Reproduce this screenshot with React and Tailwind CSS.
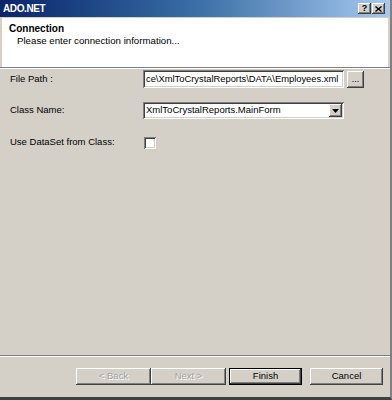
import React from "react";

const raised =
  "shadow-[inset_-1px_-1px_0_#404040,inset_1px_1px_0_#ffffff,inset_-2px_-2px_0_#808080,inset_2px_2px_0_#d4d0c8]";
const sunken =
  "shadow-[inset_1px_1px_0_#808080,inset_-1px_-1px_0_#ffffff,inset_2px_2px_0_#404040,inset_-2px_-2px_0_#d4d0c8]";

function Btn({ children, w, disabled, isDefault }) {
  return (
    <div
      className={`${w} h-[17px] bg-[#d4d0c8] flex items-center justify-center text-[9.5px] ${
        isDefault ? "border border-black" : ""
      } ${raised} ${disabled ? "text-[#a0a0a0] [text-shadow:1px_1px_0_#ffffff]" : "text-black"}`}
    >
      {children}
    </div>
  );
}

export default function App() {
  return (
    <div
      className="w-[392px] h-[400px] bg-[#d4d0c8] flex flex-col border-r-[2px] border-b-[3px] border-r-[#808080] border-b-[#404040] overflow-hidden"
      style={{ fontFamily: '"Liberation Sans", Arial, sans-serif' }}
    >
      {/* Title bar */}
      <div className="h-[17px] bg-gradient-to-r from-[#0a246a] via-[#3a6ea5] to-[#a6caf0] flex items-center justify-between pl-[3px] pr-[5px]">
        <span className="text-white font-bold text-[10px] tracking-[-0.4px] leading-none">ADO.NET</span>
        <div className="flex gap-[1px]">
          <div className={`w-[13px] h-[11px] bg-[#d4d0c8] ${raised} flex items-center justify-center text-[9px] font-bold leading-none text-black`}>
            ?
          </div>
          <div className={`w-[13px] h-[11px] bg-[#d4d0c8] ${raised} flex items-center justify-center`}>
            <svg width="7" height="6" viewBox="0 0 7 6">
              <path d="M0.5 0.5 L6.5 5.5 M6.5 0.5 L0.5 5.5" stroke="black" strokeWidth="1.4" />
            </svg>
          </div>
        </div>
      </div>

      {/* Header */}
      <div className="mt-[1px] ml-[2px] mr-[2px] h-[49px] bg-white flex flex-col pl-[7px] pt-[5px]">
        <div className="font-bold text-[10px] leading-[12px] text-black">Connection</div>
        <div className="text-[9.7px] leading-[12px] text-black pl-[8px]">Please enter connection information...</div>
      </div>
      <div className="h-[2px] border-t border-t-[#808080] border-b border-b-white" />

      {/* Body */}
      <div className="flex-1 flex flex-col pt-[1px] pl-[10px] text-[9.5px] text-black">
        <div className="flex items-center h-[18px]">
          <div className="w-[133px]">File Path :</div>
          <div className={`w-[201px] h-[18px] bg-white ${sunken} flex items-center pl-[3px] overflow-hidden whitespace-nowrap text-[9.35px]`}>
            ce\XmlToCrystalReports\DATA\Employees.xml
          </div>
          <div className={`ml-[3px] w-[17px] h-[17px] bg-[#d4d0c8] ${raised} flex items-center justify-center text-[9px] leading-none`}>
            ...
          </div>
        </div>

        <div className="flex items-center h-[17px] mt-[14px]">
          <div className="w-[133px]">Class Name:</div>
          <div className={`w-[201px] h-[17px] bg-white ${sunken} flex items-center pl-[3px] pr-[2px]`}>
            <span className="flex-1 whitespace-nowrap">XmlToCrystalReports.MainForm</span>
            <div className={`w-[13px] h-[13px] bg-[#d4d0c8] ${raised} flex items-center justify-center`}>
              <svg width="7" height="4" viewBox="0 0 7 4">
                <path d="M0 0 H7 L3.5 4 Z" fill="black" />
              </svg>
            </div>
          </div>
        </div>

        <div className="flex items-center h-[13px] mt-[17px]">
          <div className="w-[134px]">Use DataSet from Class:</div>
          <div className={`w-[12px] h-[12px] bg-white ${sunken}`} />
        </div>
      </div>

      <div className="h-[2px] border-t border-t-[#808080] border-b border-b-white" />

      {/* Buttons */}
      <div className="flex justify-end pt-[11px] pb-[12px] pr-[7px]">
        <Btn w="w-[75px]" disabled>&lt; Back</Btn>
        <Btn w="w-[75px]" disabled>Next &gt;</Btn>
        <div className="w-[3px]" />
        <Btn w="w-[73px]" isDefault>Finish</Btn>
        <div className="w-[8px]" />
        <Btn w="w-[73px]">Cancel</Btn>
      </div>
    </div>
  );
}
